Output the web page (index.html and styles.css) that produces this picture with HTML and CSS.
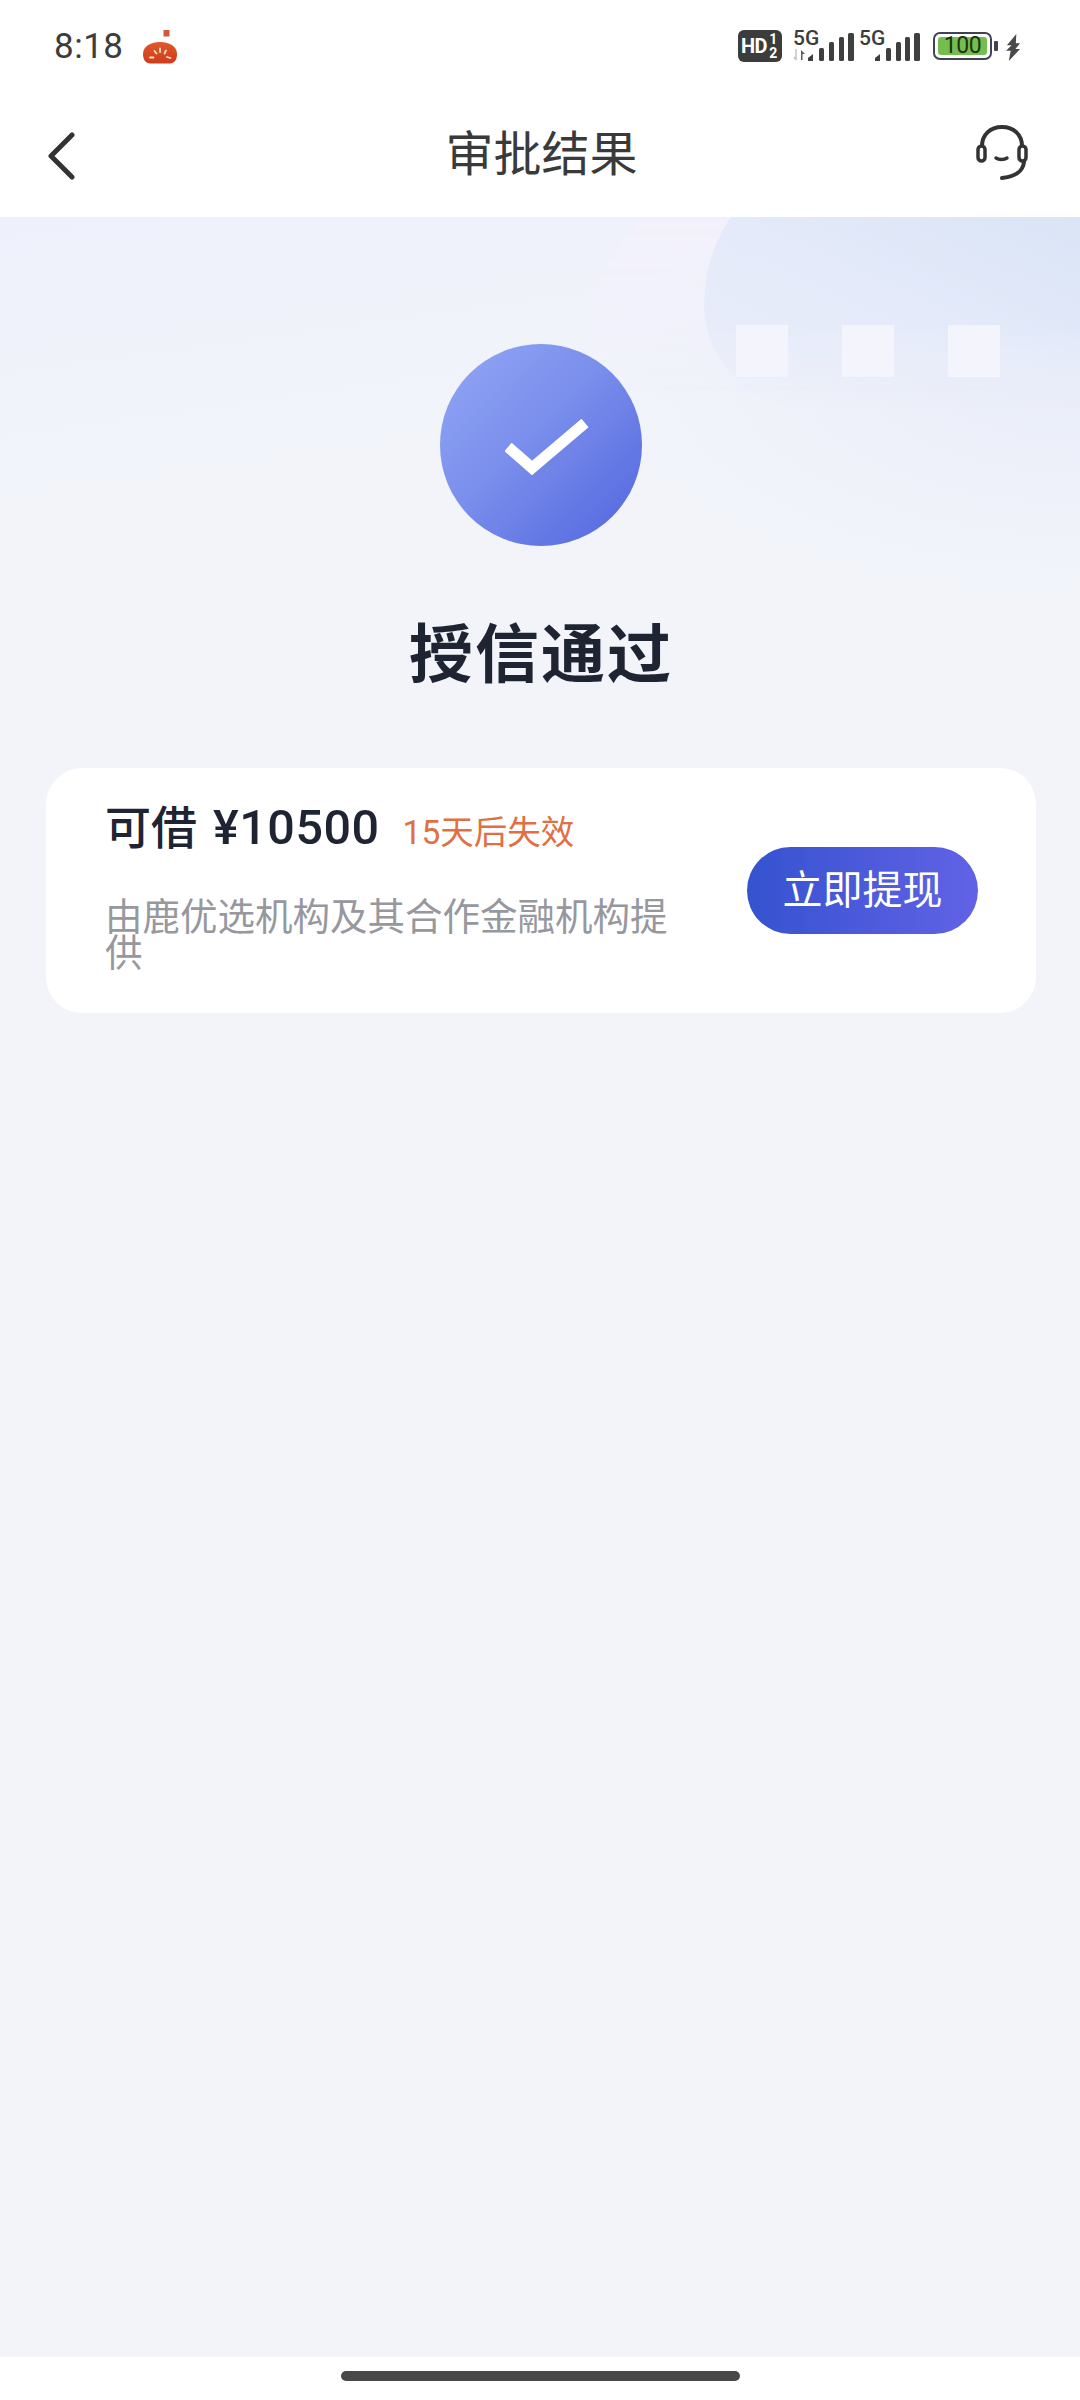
FILE: index.html
```html
<!DOCTYPE html>
<html lang="zh-CN">

<head>
    <meta charset="UTF-8">
    <meta name="viewport" content="width=device-width, initial-scale=1.0">
    <title>审批结果</title>
    <link rel="stylesheet" href="styles.css">
</head>

<body>
    <header class="top">
        <div class="status-bar">
            <div class="status-left">
                <span class="clock">8:18</span>
                <svg class="app-icon" width="36" height="36" viewBox="0 0 36 36">
                    <defs>
                        <linearGradient id="tomato" x1="0" y1="0" x2="0" y2="1">
                            <stop offset="0" stop-color="#e0592c" />
                            <stop offset="1" stop-color="#d03a1c" />
                        </linearGradient>
                    </defs>
                    <rect x="21.5" y="0" width="6" height="6.5" fill="#cf5a36" />
                    <path d="M1 24C1 16 9 12 18 12S35 16 35 24C35 30 32 33.500 28 33.500H8C4 33.500 1 30 1 24Z" fill="url(#tomato)" />
                    <path d="M8 27.500h3.500M12.500 21l2 2.500M18 18.500v3.500M24 20.500l-1.500 3M25 27l3.500 1" stroke="#fbe3c8" stroke-width="1.800" stroke-linecap="round" fill="none" />
                </svg>
            </div>
            <div class="status-right">
                <div class="hd-badge">
                    <span class="hd-text">HD</span>
                    <span class="hd-nums"><span>1</span><span>2</span></span>
                </div>
                <div class="signal signal-first">
                    <span class="net">5G</span>
                    <svg width="62" height="32" viewBox="0 0 62 32" class="bars">
                        <path d="M3 19v11M3 30l-2-3" stroke="#c4c4c4" stroke-width="1.500" fill="none" />
                        <path d="M8 20l4 4H9.500v6H8Z" fill="#5a5a5a" />
                        <path d="M15 31v-3l5-4v7Z" fill="#3f3f3f" />
                        <rect x="26" y="18" width="5" height="13" rx="1.500" fill="#3f3f3f" />
                        <rect x="36" y="12" width="5" height="19" rx="1.500" fill="#3f3f3f" />
                        <rect x="46" y="7" width="5" height="24" rx="1.500" fill="#3f3f3f" />
                        <rect x="55" y="3" width="6" height="28" rx="1.500" fill="#3f3f3f" />
                    </svg>
                </div>
                <div class="signal signal-second">
                    <span class="net">5G</span>
                    <svg width="61" height="32" viewBox="0 0 61 32" class="bars">
                        <path d="M16 31v-3l5-4v7Z" fill="#3f3f3f" />
                        <rect x="27" y="18" width="5" height="13" rx="1.500" fill="#3f3f3f" />
                        <rect x="37" y="12" width="5" height="19" rx="1.500" fill="#3f3f3f" />
                        <rect x="46" y="7" width="5" height="24" rx="1.500" fill="#3f3f3f" />
                        <rect x="55" y="3" width="6" height="28" rx="1.500" fill="#3f3f3f" />
                    </svg>
                </div>
                <div class="battery">
                    <div class="battery-body"><span class="battery-level">100</span></div>
                    <span class="battery-tip"></span>
                </div>
                <svg class="bolt" width="15" height="29" viewBox="0 0 16 29">
                    <path d="M11 0 1 12h5L0 18h5L3 29l12-13h-5l5-6h-4.500Z" fill="#4a4a4a" />
                </svg>
            </div>
        </div>
        <nav class="nav-bar">
            <svg class="back" width="29" height="48" viewBox="0 0 29 48">
                <path d="M25 3 4 24l21 21" fill="none" stroke="#333" stroke-width="5" stroke-linecap="round" stroke-linejoin="round" />
            </svg>
            <h1 class="nav-title">审批结果</h1>
            <svg class="headset" width="52" height="56" viewBox="0 0 52 56">
                <path d="M6 22V21C6 10 14 2 26 2S46 10 46 21V22" fill="none" stroke="#333" stroke-width="4" />
                <rect x="2" y="21" width="7" height="15" rx="3.500" fill="#fff" stroke="#333" stroke-width="3.500" />
                <rect x="43" y="21" width="7" height="15" rx="3.500" fill="#fff" stroke="#333" stroke-width="3.500" />
                <path d="M48 37C47 46 39 52 26 53" fill="none" stroke="#333" stroke-width="4" stroke-linecap="round" />
                <path d="M20 33C23 35 28 35 31 33" fill="none" stroke="#333" stroke-width="3.500" stroke-linecap="round" />
            </svg>
        </nav>
    </header>

    <main class="content">
        <div class="hero-bg">
            <div class="blob-light"></div>
            <div class="blob"></div>
            <div class="hero-squares">
                <span></span>
                <span></span>
                <span></span>
            </div>
        </div>

        <section class="result">
            <div class="result-icon">
                <svg width="84" height="60" viewBox="0 0 84 60">
                    <path d="M3 28 27 49 80 4" fill="none" stroke="#fff" stroke-width="11" />
                </svg>
            </div>
            <h2 class="result-title">授信通过</h2>
        </section>

        <section class="card">
            <div class="card-info">
                <div class="card-head">
                    <span class="amount">可借<span class="money">¥10500</span></span>
                    <span class="expire">15天后失效</span>
                </div>
                <p class="provider">由鹿优选机构及其合作金融机构提供</p>
            </div>
            <a class="withdraw">立即提现</a>
        </section>
    </main>

    <footer class="bottom">
        <span class="home-bar"></span>
    </footer>
</body>

</html>
```

FILE: styles.css
```css
* {
    box-sizing: border-box;
}

body {
    margin: 0;
    width: 1080px;
    height: 2400px;
    display: flex;
    flex-direction: column;
    background-color: #f2f4fa;
    font-family: "Noto Sans CJK SC", "Noto Sans", sans-serif;
    color: #1f2433;
}

/* Barra superior */
.top {
    height: 217px;
    background-color: #fff;
}

.status-bar {
    height: 92px;
    padding: 30px 59px 0 54px;
    display: flex;
    justify-content: space-between;
    align-items: flex-start;
}

.status-left {
    display: flex;
    align-items: flex-start;
}

.clock {
    font-family: Roboto, sans-serif;
    font-size: 35px;
    line-height: 34px;
    color: #3c3c3c;
    letter-spacing: 0.5px;
}

.app-icon {
    margin-left: 18px;
}

.status-right {
    display: flex;
    align-items: flex-start;
    font-family: Roboto, sans-serif;
}

.hd-badge {
    width: 44px;
    height: 32px;
    padding-left: 3px;
    border-radius: 6px;
    background-color: #3c3c3c;
    color: #fff;
    display: flex;
    align-items: center;
    font-weight: 700;
}

.hd-text {
    font-size: 20px;
    letter-spacing: -0.5px;
}

.hd-nums {
    margin-left: 2px;
    display: flex;
    flex-direction: column;
    font-size: 14px;
    line-height: 14px;
}

.signal {
    position: relative;
    height: 32px;
}

.signal-first {
    width: 61px;
    margin-left: 11px;
}

.signal-second {
    width: 61px;
    margin-left: 5px;
}

.net {
    position: absolute;
    left: 0;
    top: -3px;
    font-size: 21px;
    line-height: 22px;
    font-weight: 500;
    color: #3c3c3c;
}

.bars {
    display: block;
}

.battery {
    margin-left: 13px;
    margin-top: 2px;
    display: flex;
    align-items: center;
}

.battery-body {
    width: 59px;
    height: 28px;
    padding: 3px;
    border: 2.5px solid #3f4450;
    border-radius: 7px;
}

.battery-level {
    display: block;
    height: 100%;
    border-radius: 3px;
    background-color: #76bd4f;
    color: #17350f;
    font-size: 23px;
    line-height: 18px;
    letter-spacing: -0.5px;
    text-align: center;
}

.battery-tip {
    width: 4px;
    height: 10px;
    margin-left: 2px;
    border-radius: 1px;
    background-color: #3f4450;
}

.bolt {
    margin-left: 8px;
    margin-top: 3px;
}

.nav-bar {
    height: 125px;
    padding: 0 52px 0 47px;
    display: flex;
    align-items: center;
}

.back {
    margin-top: 3px;
}

.nav-title {
    flex: 1;
    margin: -10px 0 0;
    padding-left: 31px;
    font-size: 48px;
    line-height: 60px;
    font-weight: 400;
    text-align: center;
    color: #3a3a3a;
}

.headset {
    margin-top: -3px;
}

/* Contenido */
.content {
    position: relative;
    flex: 1;
    overflow: hidden;
}

.hero-bg {
    position: absolute;
    left: 0;
    top: 0;
    width: 100%;
    height: 420px;
    background:
        radial-gradient(ellipse 480px 230px at 100% 150px, rgba(228, 233, 248, 0.6), rgba(242, 244, 250, 0)),
        linear-gradient(172deg, #eef0fb 0%, #f2f4fa 50%);
}

.blob-light {
    position: absolute;
    left: 585px;
    top: -40px;
    width: 495px;
    height: 400px;
    border-radius: 170px 0 0 200px;
    background: #f2f1fb;
    -webkit-mask-image: linear-gradient(180deg, #000 10%, transparent 55%);
    mask-image: linear-gradient(180deg, #000 10%, transparent 55%);
}

.blob {
    position: absolute;
    left: 704px;
    top: -70px;
    width: 376px;
    height: 262px;
    border-radius: 165px 0 0 110px;
    background: linear-gradient(205deg, #d8e3f5 10%, #e4eafa 55%, #eaedf9 100%);
    -webkit-mask-image: linear-gradient(180deg, #000 70%, transparent 100%);
    mask-image: linear-gradient(180deg, #000 70%, transparent 100%);
}

.hero-squares {
    position: absolute;
    left: 736px;
    top: 108px;
    display: flex;
    gap: 54px;
}

.hero-squares span {
    width: 52px;
    height: 52px;
    background-color: #f4f5fc;
}

.result {
    position: relative;
    padding-top: 127px;
    display: flex;
    flex-direction: column;
    align-items: center;
}

.result-icon {
    width: 202px;
    height: 202px;
    margin-left: 2px;
    padding-top: 8px;
    padding-left: 12px;
    border-radius: 50%;
    background: linear-gradient(135deg, #8da2f3 10%, #7a8eec 45%, #5468df 95%);
    display: flex;
    align-items: center;
    justify-content: center;
}

.result-title {
    margin: 57px 0 0 2px;
    font-size: 64px;
    line-height: 92px;
    font-weight: 700;
    letter-spacing: 2px;
    color: #1f2433;
}

.card {
    position: relative;
    margin: 73px 44px 0 46px;
    height: 245px;
    padding: 0 58px 0 59px;
    border-radius: 36px;
    background-color: #fff;
    display: flex;
    align-items: center;
    justify-content: space-between;
}

.card-info {
    width: 570px;
    padding-bottom: 19px;
}

.card-head {
    display: flex;
    align-items: baseline;
}

.amount {
    font-size: 46px;
    line-height: 60px;
    font-weight: 500;
    color: #1f2433;
}

.money {
    margin-left: 16px;
    font-family: Roboto, sans-serif;
    font-size: 48.5px;
    letter-spacing: 0.5px;
}

.expire {
    margin-left: 23px;
    font-family: Roboto, "Noto Sans CJK SC", sans-serif;
    font-size: 33.5px;
    line-height: 60px;
    color: #e07044;
}

.provider {
    margin: 33px 0 0;
    font-size: 37.5px;
    line-height: 36px;
    color: #96989e;
}

.withdraw {
    width: 231px;
    height: 87px;
    border-radius: 44px;
    background: linear-gradient(90deg, #3553cf 0%, #6262e6 100%);
    color: #fff;
    font-size: 40px;
    line-height: 81px;
    text-align: center;
}

/* Barra inferior */
.bottom {
    height: 43px;
    padding-top: 14px;
    background-color: #fff;
    display: flex;
    justify-content: center;
}

.home-bar {
    width: 399px;
    height: 10px;
    border-radius: 5px;
    background-color: #484848;
}
```
